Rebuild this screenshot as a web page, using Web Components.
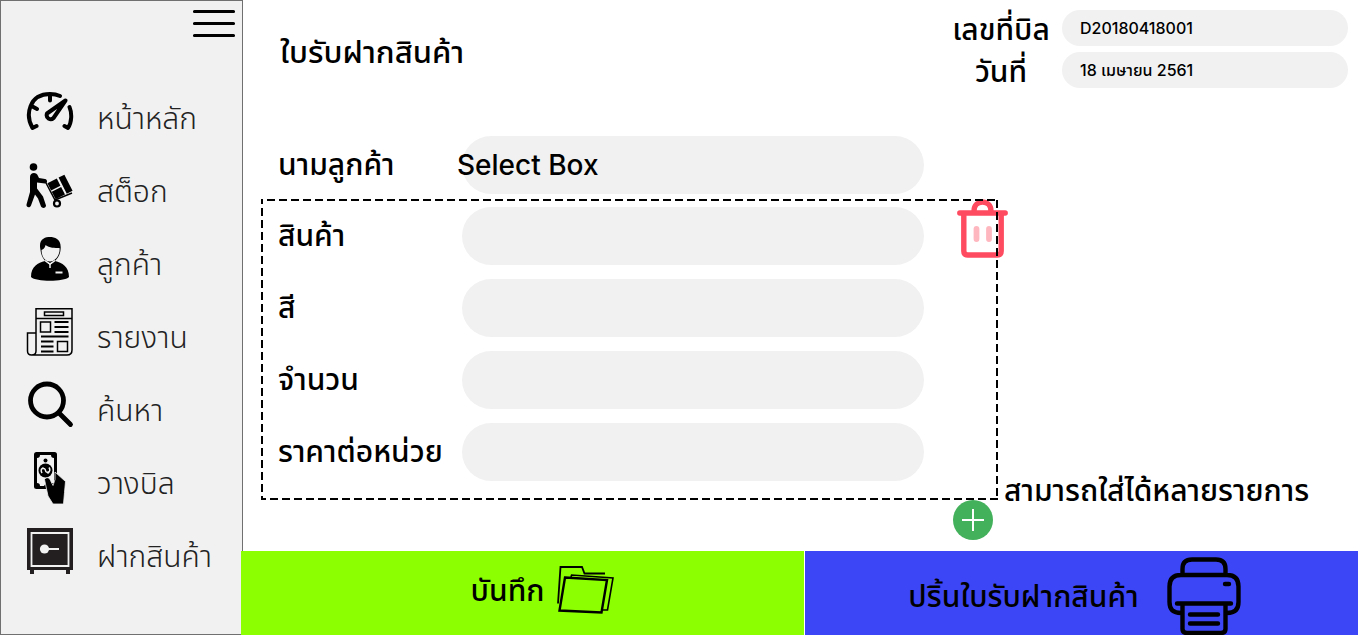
<!DOCTYPE html>
<html lang="th">
<head>
<meta charset="utf-8">
<meta name="viewport" content="width=device-width, initial-scale=1">
<title>ใบรับฝากสินค้า</title>
<style>
  html, body { margin: 0; min-height: 100%; }
  body {
    --pill: #f1f1f1;
    --ink: #000;
    font-family: "Noto Sans Thai", Inter, "Liberation Sans", sans-serif;
    font-size: 30px;
    line-height: 40px;
    color: var(--ink);
    background: #fff;
  }
</style>
</head>
<body>
<deposit-app></deposit-app>

<script>
const ICONS = {
  menu: `<svg width="44" height="30" viewBox="0 0 44 30"><path d="M2.500 2.500h39M2.500 14.500h39M2.500 26.500h39" stroke="#000" stroke-width="3.200" stroke-linecap="round"/></svg>`,
  home: `<svg width="48" height="48" viewBox="0 0 48 48" fill="none" stroke="#000" stroke-width="4" stroke-linecap="round" stroke-linejoin="round"><path d="M10.500 37l-4 2C-1 26 3 5 24 5c4 0 7 .6 10 2M24 6v5.500M6.500 17.500l4.500 2.500M43.500 18c2.500 6 2.500 15-1.500 21l-3.500-2M39.500 11.500L27.500 29c-3 3-8 0-6.500-4.500z"/></svg>`,
  stock: `<svg width="48" height="48" viewBox="0 0 48 48"><circle cx="7.500" cy="5" r="3.800"/><path d="M4 15c0-5 7-5 8-1l1 2 6 1c3 .5 2.500 4.500 0 4.500l-8-1v6l6 8 3 9c0 3-4 3-5 1l-3-8-3-4-4 11c-1 3-5 2-4.500-1L4 30z"/><path d="M19.500 20l9.500 18 17-7" fill="none" stroke="#000" stroke-width="1.500"/><g transform="rotate(-27 34 25)"><path d="M24.500 16H35v8H24.500zM24.500 25.500H35V34H24.500zM37 16h6.500v18H37z"/></g><circle cx="31" cy="41.500" r="3" fill="none" stroke="#000" stroke-width="2.200"/></svg>`,
  customer: `<svg width="48" height="48" viewBox="0 0 48 48"><path d="M14.500 15C12 4 19 2 24 2s12 2 10.500 13c-.5 7-6 13-10.500 13S15 22 14.500 15z"/><path d="M15.500 15c3-1 4-4 4-5 4 3 9 3 14 3 1 6-4 13.500-9.500 13.500S15.500 21 15.500 15z" fill="#f1f1f1"/><path d="M5 42c0-11 7-14 14-16l5 4 5-4c7 2 14 5 14 16-5 5-33 5-38 0z"/><path d="M19 25.500l5 3.500 5-3.500M24 28v5" fill="none" stroke="#f1f1f1" stroke-width="1.500"/><path d="M29.500 36.500h7v2h-7z" fill="#f1f1f1"/></svg>`,
  report: `<svg width="48" height="50" viewBox="0 0 48 50" fill="none" stroke="#000" stroke-width="1.500"><path d="M10 44V1.800h36V43q0 5-5 5H5.500q-4 0-4-4V26H10v18q0 4-4.500 4M10 11.500h36M18.500 5h19v3.500h-19zM14.500 15h10v10h-10zM31.500 34.500h10v10h-10z"/><path d="M28.500 15h14M28.500 20h14M28.500 25h14M15 29.500h27.500M15 34.500h12.500M15 39.500h12.500M15 44.500h12.500" stroke-width="1.800"/></svg>`,
  search: `<svg width="48" height="48" viewBox="0 0 48 48" fill="none" stroke="#000" stroke-width="4.800" stroke-linecap="round"><circle cx="21" cy="19.500" r="16.500"/><path d="M33.500 32.500l11 11"/></svg>`,
  billing: `<svg width="48" height="54" viewBox="0 0 48 54"><rect x="8" y="1" width="23" height="37" rx="2.500"/><path d="M14 4h11c0 2 1 3 3 3v25h-8l-2 3h-4c0-2-1-3-3-3V7c2 0 3-1 3-3z" fill="#f1f1f1"/><circle cx="19.500" cy="9.500" r="2"/><circle cx="19.500" cy="19.500" r="7"/><path d="M16 22c-3-5 3-6 3.500-2.500S26 21 23 16.500M15.500 18l2-1.500M21.500 22.500l2-1.500" fill="none" stroke="#f1f1f1" stroke-width="1.500"/><path d="M18.500 28.500c2-3 5-2 6 1l2.500 5 2-6V21l10.500 9.500-1 11-1 11.500H27l-5-8z" stroke="#f1f1f1" stroke-width=".8"/></svg>`,
  deposit: `<svg width="48" height="48" viewBox="0 0 48 48"><path d="M1 1h46v42h-3v4h-4v-4H8v4H4v-4H1z" fill="#231f20"/><path d="M5.500 6h37v33h-37z" fill="none" stroke="#f1f1f1" stroke-width="1.800"/><circle cx="18.500" cy="22" r="4.600" fill="#f1f1f1"/><path d="M20 22h13" stroke="#f1f1f1" stroke-width="2"/></svg>`,
  trash: `<svg width="51" height="59" viewBox="0 0 51 59" fill="none" stroke="#ff4b5f" stroke-width="5.400" stroke-linecap="round" stroke-linejoin="round"><path d="M2.800 14h45.400M17 13v-1c0-12 17-12 17 0v1M6.800 15v37q0 4 4 4h29.400q4 0 4-4V15"/><path d="M19.500 30v10M32 30v10" stroke="#ffb7bf" stroke-width="5.800"/></svg>`,
  plus: `<svg width="40" height="40" viewBox="0 0 40 40"><circle cx="20" cy="20" r="20" fill="#43b05c"/><path d="M9 20h22M20 9v22" stroke="#fff" stroke-width="2"/></svg>`,
  folder: `<svg width="58" height="50" viewBox="0 0 58 50" fill="none" stroke="#000"><path d="M2 38.500L4.500 2H26l2.500 6.500H49" stroke-width="1.800"/><path d="M15 12l.6-2L57 13l-5.500 32H46" stroke-width="1.600"/><path d="M9 12.500L51 15l-5.500 32.500L3.500 45.500z" stroke-width="2.400"/></svg>`,
  printer: `<svg width="74" height="78" viewBox="0 0 74 78" fill="none" stroke="#000" stroke-width="4.400" stroke-linecap="round" stroke-linejoin="round"><path d="M15.500 17v-5q0-9.500 9.500-9.500h24q9.500 0 9.500 9.500v5M14 56q-11.500 0-11.500-11V29.500q0-11.500 11.500-11.500h46q11.500 0 11.500 11.500V45q0 11-11.500 11M10 46.500h54M15.500 47v25q0 4 4.500 4h34q4.500 0 4.500-4V47M58 27h4M23 57.500h28M23 66.500h28"/></svg>`
};

class AppIcon extends HTMLElement {
  connectedCallback() {
    this.attachShadow({ mode: "open" }).innerHTML =
      `<style>:host{display:block;flex:none}svg{display:block}</style>${ICONS[this.getAttribute("name")]}`;
    this.shadowRoot.querySelector("svg").setAttribute("aria-hidden", "true");
  }
}
customElements.define("app-icon", AppIcon);

class NavItem extends HTMLElement {
  connectedCallback() {
    this.attachShadow({ mode: "open" }).innerHTML = `
      <style>
        :host { display: block; }
        a { display: flex; align-items: center; gap: 23px; height: 73px; padding-left: 25px;
            color: #222; text-decoration: none; font-weight: 300; white-space: nowrap; }
        app-icon { width: 48px; }
        span { padding-top: 14px; }
      </style>
      <a href="#${this.getAttribute("icon")}"><app-icon name="${this.getAttribute("icon")}"></app-icon><span><slot></slot></span></a>`;
  }
}
customElements.define("nav-item", NavItem);

class SideBar extends HTMLElement {
  connectedCallback() {
    this.attachShadow({ mode: "open" }).innerHTML = `
      <style>
        :host { display: block; box-sizing: border-box; border: 1px solid #707070; background: #f1f1f1; }
        button { display: block; margin: 8px 6px 0 auto; padding: 0; border: 0; background: none; }
        nav { padding-top: 37px; }
      </style>
      <button type="button" aria-label="เมนู"><app-icon name="menu"></app-icon></button>
      <nav><slot></slot></nav>`;
  }
}
customElements.define("side-bar", SideBar);

class BillField extends HTMLElement {
  connectedCallback() {
    this.attachShadow({ mode: "open" }).innerHTML = `
      <style>
        :host { display: grid; grid-template-columns: 98px 286px; column-gap: 12px; align-items: center; }
        label { padding-top: 6px; line-height: 30px; text-align: center; font-weight: 500; white-space: nowrap; }
        input { box-sizing: border-box; width: 100%; height: 36px; padding: 0 18px; border: 0; border-radius: 18px;
                background: var(--pill); color: var(--ink); font: 500 16px/36px Inter, "Noto Sans Thai", sans-serif; }
      </style>
      <label for="f">${this.getAttribute("label")}</label>
      <input id="f" type="text" value="${this.getAttribute("value")}">`;
  }
}
customElements.define("bill-field", BillField);

class FormRow extends HTMLElement {
  connectedCallback() {
    const control = this.getAttribute("kind") === "select"
      ? `<select id="f"><option>Select Box</option></select>`
      : `<input id="f" type="text">`;
    this.attachShadow({ mode: "open" }).innerHTML = `
      <style>
        :host { display: grid; grid-template-columns: 184px minmax(0, 462px); align-items: center; }
        label { padding-top: 2px; font-weight: 500; white-space: nowrap; }
        .pill { height: 58px; border-radius: 29px; background: var(--pill); }
        input, select { display: block; box-sizing: border-box; width: 100%; height: 58px; padding: 0 28px; border: 0;
                        background: none; color: var(--ink); font: 500 28px/58px Inter, "Noto Sans Thai", sans-serif; }
        select { appearance: none; width: calc(100% + 5px); margin-left: -5px; padding: 0; }
      </style>
      <label for="f">${this.getAttribute("label")}</label>
      <div class="pill">${control}</div>`;
  }
}
customElements.define("form-row", FormRow);

class ItemCard extends HTMLElement {
  connectedCallback() {
    this.attachShadow({ mode: "open" }).innerHTML = `
      <style>
        :host { display: block; position: relative; box-sizing: border-box; padding: 8px 74px 19px 17px; }
        .rows { display: grid; gap: 14px; }
        .dash {
          position: absolute; inset: 0; pointer-events: none;
          background:
            repeating-linear-gradient(90deg, #000 0 2px, transparent 2px 6px, #000 6px 12px) top / 100% 2px no-repeat,
            repeating-linear-gradient(90deg, #000 0 5px, transparent 5px 9px, #000 9px 12px) bottom / 100% 2px no-repeat,
            repeating-linear-gradient(#000 0 5px, transparent 5px 9px, #000 9px 12px) left / 2px 100% no-repeat,
            repeating-linear-gradient(transparent 0 1px, #000 1px 9px, transparent 9px 12px) right / 2px 100% no-repeat;
        }
        button { position: absolute; top: 0; right: -10px; padding: 0; border: 0; background: none; }
      </style>
      <div class="rows"><slot></slot></div>
      <button type="button" aria-label="ลบ"><app-icon name="trash"></app-icon></button>
      <div class="dash"></div>`;
  }
}
customElements.define("item-card", ItemCard);

class ActionButton extends HTMLElement {
  connectedCallback() {
    this.attachShadow({ mode: "open" }).innerHTML = `
      <style>
        :host { display: block; }
        button { display: flex; align-items: center; justify-content: center; gap: var(--gap);
                 box-sizing: border-box; width: 100%; height: 84px;
                 padding: var(--pad); border: 0; background: var(--fill); color: var(--ink);
                 font: inherit; font-weight: 500; white-space: nowrap; }
        span { padding-top: 4px; }
      </style>
      <button type="button"><span><slot></slot></span><app-icon name="${this.getAttribute("icon")}"></app-icon></button>`;
  }
}
customElements.define("action-button", ActionButton);

class DepositApp extends HTMLElement {
  connectedCallback() {
    this.attachShadow({ mode: "open" }).innerHTML = `
      <style>
        :host { display: grid; grid-template-columns: 243px minmax(0, 1fr); min-height: 100vh; }
        main { display: flex; flex-direction: column; }
        header { display: flex; justify-content: space-between; padding: 10px 10px 0 37px; }
        h1 { margin: 24px 0 0; font-size: 31px; line-height: 40px; font-weight: 500; }
        .bill { display: grid; gap: 6px; }
        .form { flex: 1; display: grid; grid-template-columns: minmax(0, 737px) minmax(0, 1fr); align-content: start;
                padding: 48px 10px 10px 18px; }
        .customer { grid-column: 1; padding-left: 17px; margin-bottom: 5px; }
        item-card { grid-column: 1; }
        .note { grid-column: 2; align-self: end; margin: 0 0 -12px 6px; font-weight: 500; white-space: nowrap; }
        .add { grid-column: 1; justify-self: end; margin-right: 5px; padding: 0; border: 0; border-radius: 50%; background: none; }
        footer { position: relative; display: grid; grid-template-columns: 563fr 553fr; gap: 1px; margin-left: -2px; }
        .save { --fill: #8cff00; --gap: 12px; --pad: 0 0 6px 40px; }
        .print { --fill: #3d46f6; --gap: 28px; --pad: 6px 14px 0 0; }
      </style>
      <side-bar>
        <nav-item icon="home">หน้าหลัก</nav-item>
        <nav-item icon="stock">สต็อก</nav-item>
        <nav-item icon="customer">ลูกค้า</nav-item>
        <nav-item icon="report">รายงาน</nav-item>
        <nav-item icon="search">ค้นหา</nav-item>
        <nav-item icon="billing">วางบิล</nav-item>
        <nav-item icon="deposit">ฝากสินค้า</nav-item>
      </side-bar>
      <main>
        <header>
          <h1>ใบรับฝากสินค้า</h1>
          <div class="bill">
            <bill-field label="เลขที่บิล" value="D20180418001"></bill-field>
            <bill-field label="วันที่" value="18 เมษายน 2561"></bill-field>
          </div>
        </header>
        <div class="form">
          <form-row class="customer" kind="select" label="นามลูกค้า"></form-row>
          <item-card>
            <form-row label="สินค้า"></form-row>
            <form-row label="สี"></form-row>
            <form-row label="จำนวน"></form-row>
            <form-row label="ราคาต่อหน่วย"></form-row>
          </item-card>
          <p class="note">สามารถใส่ได้หลายรายการ</p>
          <button class="add" type="button" aria-label="เพิ่ม"><app-icon name="plus"></app-icon></button>
        </div>
        <footer>
          <action-button class="save" icon="folder">บันทึก</action-button>
          <action-button class="print" icon="printer">ปริ้นใบรับฝากสินค้า</action-button>
        </footer>
      </main>`;
  }
}
customElements.define("deposit-app", DepositApp);
</script>
</body>
</html>
